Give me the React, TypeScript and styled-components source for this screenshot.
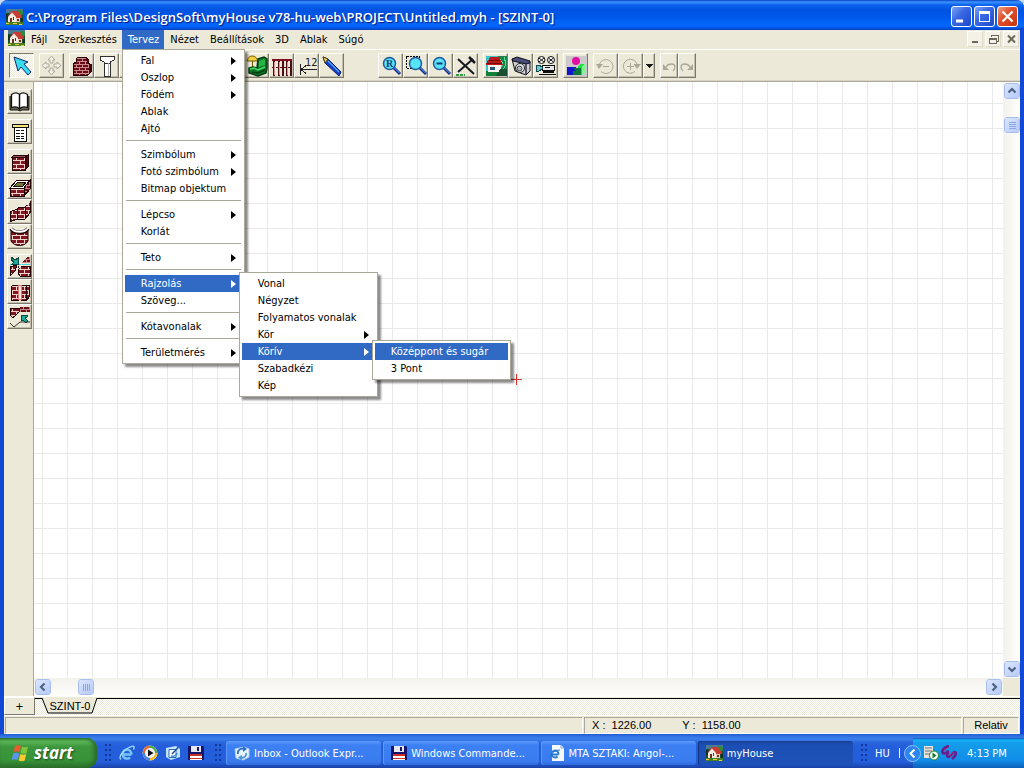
import React from "react";
import styled, { createGlobalStyle, css } from "styled-components";

const Global = createGlobalStyle`
  * { box-sizing: border-box; }
  html, body { margin: 0; padding: 0; background: #c8d8ee; }
  body, button {
    font-family: Tahoma, "DejaVu Sans Condensed", "Noto Sans", sans-serif;
    font-size: 11px;
    line-height: 17px;
    color: #000;
  }
  button { border: 0; padding: 0; background: none; }
  svg { display: block; }
  ul { list-style: none; margin: 0; padding: 0; }
`;

const face = "#ece9d8";
const select = "#316ac5";

const Desktop = styled.div`
  display: flex;
  flex-direction: column;
  min-height: 100vh;
`;

const Window = styled.main`
  flex: 1;
  display: flex;
  flex-direction: column;
  border: solid #1248d8;
  border-width: 0 4px;
  border-radius: 8px 8px 0 0;
  background: ${face};
`;

const TitleBar = styled.header`
  display: flex;
  align-items: center;
  gap: 2px;
  height: 30px;
  margin: 0 -4px;
  padding: 3px 6px 0;
  border-radius: 8px 8px 0 0;
  background: linear-gradient(#0a3fc4 0, #3a94ff 2px, #0c62ee 5px, #0053e1 10px, #0058ea 17px, #0267fb 24px, #0260f5 27px, #0040c0 30px);
`;

const Title = styled.h1`
  flex: 1;
  min-width: 0;
  margin: 0 0 0 1px;
  overflow: hidden;
  white-space: nowrap;
  font: 600 13px/20px "Trebuchet MS", "Open Sans", sans-serif;
  color: #fff;
  text-shadow: 1px 1px 1px #0a1883;
`;

const CaptionButton = styled.button<{ $close?: boolean }>`
  width: 21px;
  height: 21px;
  border: 1px solid #fff;
  border-radius: 3px;
  background: ${(p) =>
    p.$close
      ? "linear-gradient(135deg, #f0a488, #e0512c 40%, #c4350f)"
      : "linear-gradient(135deg, #7ea4f4, #3a6ae4 40%, #1c46cc)"};
`;

const MenuBar = styled.nav`
  display: flex;
  height: 20px;
  padding: 0 1px 0 4px;
  border-bottom: 1px solid #fff;
`;

const Spring = styled.span`
  flex: 1;
`;

const MenuSlot = styled.div`
  position: relative;
`;

const MenuLabel = styled.button<{ $open?: boolean }>`
  height: 19px;
  padding: 0 5px 0 6px;
  background: ${(p) => (p.$open ? select : "transparent")};
  color: ${(p) => (p.$open ? "#fff" : "#000")};
`;

const MdiButton = styled.button`
  width: 16px;
  height: 16px;
  margin: 1px 0 0 2px;
  border: 1px solid;
  border-color: #fff #dedac8 #dedac8 #fff;
  background: #f3f1e8;
`;

const Popup = styled.ul<{ $sub?: boolean }>`
  position: absolute;
  z-index: 2;
  top: ${(p) => (p.$sub ? "-3px" : "19px")};
  left: ${(p) => (p.$sub ? "calc(100% - 3px)" : "0")};
  width: ${(p) => (p.$sub ? "139px" : "123px")};
  padding: 2px;
  border: 1px solid #aca899;
  background: #fff;
  box-shadow: 3px 3px 2px rgba(0, 0, 0, 0.45);
`;

const Entry = styled.li`
  position: relative;
`;

const EntryButton = styled.button<{ $on?: boolean }>`
  display: flex;
  align-items: center;
  justify-content: space-between;
  width: 100%;
  height: 17px;
  padding: 0 6px 0 16px;
  white-space: nowrap;
  background: ${(p) => (p.$on ? select : "transparent")};
  color: ${(p) => (p.$on ? "#fff" : "#000")};
`;

const Separator = styled.li`
  height: 1px;
  margin: 3px 1px 5px;
  background: #aca899;
`;

const ToolBar = styled.div`
  display: flex;
  height: 32px;
  padding: 3px 5px 0;
  border-bottom: 1px solid #aca899;
  box-shadow: inset 0 -1px #d8d4c4;
`;

const ToolGroup = styled.div<{ $column?: boolean }>`
  display: flex;
  flex-direction: ${(p) => (p.$column ? "column" : "row")};
  margin: ${(p) => (p.$column ? "0 0 5px" : "0 5px 0 0")};
`;

const ToolGap = styled.span`
  width: 29px;
`;

const ToolButton = styled.button<{ $w?: number; $pressed?: boolean }>`
  display: flex;
  align-items: center;
  justify-content: center;
  width: ${(p) => p.$w ?? 25}px;
  height: 25px;
  border: 1px solid;
  border-color: #fff #7c796c #7c796c #fff;
  box-shadow: inset -1px -1px #c4c0b0;
  ${(p) =>
    p.$pressed &&
    css`
      border-color: #7c796c #fff #fff #7c796c;
      box-shadow: none;
      background: repeating-conic-gradient(#fff 0 25%, #ece9d8 0 50%) 0 0 / 2px 2px;
    `}
`;

const Work = styled.div`
  flex: 1;
  display: flex;
`;

const SideBar = styled.aside`
  width: 30px;
  padding: 7px 0 0 3px;
  border-right: 1px solid #aca899;
`;

const View = styled.section`
  flex: 1;
  display: grid;
  grid-template: 1fr 18px / 1fr 17px;
`;

const Canvas = styled.div`
  position: relative;
  background:
    linear-gradient(90deg, #e9e9e9 1px, transparent 1px) 8px 0 / 25px 25px,
    linear-gradient(#e9e9e9 1px, transparent 1px) 0 21px / 25px 25px,
    #fff;
`;

const Cross = styled.svg`
  position: absolute;
  left: 477px;
  top: 292px;
`;

const Track = styled.div<{ $v?: boolean }>`
  display: flex;
  flex-direction: ${(p) => (p.$v ? "column" : "row")};
  padding: 1px;
  background: ${(p) =>
    p.$v
      ? "linear-gradient(90deg, #f3f1ec, #fefefb)"
      : "linear-gradient(#f3f1ec, #fefefb)"};
`;

const TrackGap = styled.span<{ $size?: number }>`
  flex: ${(p) => (p.$size ? `0 0 ${p.$size}px` : "1")};
`;

const ScrollPart = styled.button`
  display: flex;
  align-items: center;
  justify-content: center;
  width: 16px;
  height: 16px;
  flex: none;
  border: 1px solid #fff;
  border-radius: 3px;
  outline: 1px solid #a8bfec;
  outline-offset: -1px;
  background: linear-gradient(135deg, #dbe6ff, #b6caf8);
`;

const TabStrip = styled.div`
  display: flex;
  height: 19px;
  border-top: 1px solid #fff;
`;

const AddTab = styled.button`
  width: 31px;
  height: 18px;
  border: 1px solid;
  border-color: #fff #7c796c #7c796c #fff;
`;

const TabWell = styled.div`
  flex: 1;
  margin-top: 1px;
  padding-left: 7px;
  border-top: 1px solid #000;
  background: repeating-conic-gradient(#fff 0 25%, #ece9d8 0 50%) 0 0 / 2px 2px;
`;

const Tab = styled.button`
  position: relative;
  display: block;
  width: 56px;
  height: 16px;
  margin-top: -1px;
  line-height: 16px;
  font-family: "Liberation Sans", sans-serif;
`;

const TabShape = styled.svg`
  position: absolute;
  inset: 0;
`;

const TabText = styled.span`
  position: relative;
`;

const StatusBar = styled.footer`
  display: flex;
  gap: 1px;
  height: 19px;
  padding: 1px 1px 0;
  border-top: 1px solid #fff;
  font: 11px/15px "Liberation Sans", sans-serif;
`;

const StatusCell = styled.div<{ $w?: number; $center?: boolean }>`
  flex: ${(p) => (p.$w ? `0 0 ${p.$w}px` : "1")};
  display: flex;
  gap: 31px;
  justify-content: ${(p) => (p.$center ? "center" : "flex-start")};
  padding: 0 7px;
  border: 1px solid;
  border-color: #aca899 #fff #fff #aca899;
`;

const TaskBar = styled.nav`
  display: flex;
  align-items: center;
  height: 34px;
  padding-top: 4px;
  color: #fff;
  background: linear-gradient(#2458d0 0, #2f70e0 2px, #3c80ec 5px, #2c68dc 8px, #245edb 12px, #245edb 28px, #1941a5 34px);
`;

const Start = styled.button`
  display: flex;
  align-items: center;
  gap: 4px;
  width: 97px;
  height: 30px;
  padding-left: 11px;
  border-radius: 0 10px 10px 0;
  font: italic bold 17px/26px "Trebuchet MS", "Open Sans", sans-serif;
  color: #fff;
  text-shadow: 1px 1px 2px #1a4a1a;
  background: linear-gradient(#2f7d2f, #5cb85a 3px, #3c963c 9px, #389438 22px, #2a702a);
  box-shadow: inset -3px 0 4px #2a6a2a;
`;

const Quick = styled.div`
  display: flex;
  gap: 7px;
  margin: 0 3px 0 8px;
`;

const QuickButton = styled.button`
  width: 16px;
  height: 16px;
`;

const Grip = styled.span`
  width: 6px;
  height: 18px;
  margin-left: 8px;
  background: radial-gradient(circle at 1px 1px, #12389c 1px, transparent 1px) 0 0 / 4px 5px;
`;

const Tasks = styled.div`
  flex: 1;
  display: flex;
  gap: 2px;
  min-width: 0;
  margin-left: 5px;
`;

const Task = styled.button<{ $active?: boolean }>`
  flex: 1;
  display: flex;
  align-items: center;
  gap: 4px;
  min-width: 0;
  height: 24px;
  padding: 0 8px;
  border-radius: 3px;
  white-space: nowrap;
  color: #fff;
  background: ${(p) =>
    p.$active
      ? "linear-gradient(#163f96, #1c4fb4 4px, #1e52b8)"
      : "linear-gradient(#5c9cfc, #3c80f4 4px, #3a7cf0 20px, #2f6ad8)"};
  box-shadow: inset 1px 0 ${(p) => (p.$active ? "#12347c" : "#5a98fa")};
`;

const Language = styled.div`
  display: flex;
  align-items: center;
  justify-content: space-between;
  width: 38px;
  padding: 0 13px 0 0;
  margin-left: 8px;
`;

const LangBar = styled.span`
  width: 1px;
  height: 10px;
  background: #fff;
`;

const Tray = styled.div`
  display: flex;
  align-items: center;
  gap: 2px;
  height: 30px;
  width: 111px;
  background: linear-gradient(#0c59b9, #18b0f8 2px, #139ee9 5px, #118ee9 22px, #0c60b8);
`;

const Chevron = styled.button`
  width: 17px;
  height: 17px;
  margin-left: -9px;
`;

const Clock = styled.time`
  margin-left: 8px;
`;

type DrawingProps = { children: React.ReactNode; w?: number };

/* 23px drawing area inside the bevel of a 25px tool button */
const ToolIcon = ({ children, w = 23 }: DrawingProps) => (
  <svg width={w} height={23} viewBox={`1 1 ${w} 23`} aria-hidden="true" shapeRendering="crispEdges">
    {children}
  </svg>
);

const Small = ({ children }: DrawingProps) => (
  <svg width={16} height={16} viewBox="0 0 16 16" aria-hidden="true">
    {children}
  </svg>
);

const PatternSheet = styled.svg`
  position: absolute;
`;

const BrickPatterns = () => (
  <PatternSheet width="0" height="0" aria-hidden="true">
    <defs>
      <pattern id="brick" width="6" height="6" patternUnits="userSpaceOnUse">
        <rect width="6" height="6" fill="#6c0c18" />
        <path d="M0 2.500H6M0 5.500H6M1.500 0V2M4.500 3V5" stroke="#c88c8c" />
      </pattern>
      <pattern id="block" width="8" height="8" patternUnits="userSpaceOnUse">
        <rect width="8" height="8" fill="#801420" />
        <path d="M0 3.500H8M0 7.500H8M1.500 0V3M5.500 4V7" stroke="#f0d4cc" />
      </pattern>
    </defs>
  </PatternSheet>
);

const House = () => (
  <svg width={17} height={16} viewBox="0 0 17 16" aria-hidden="true">
    <rect width="17" height="16" fill="#1e4a38" />
    <rect width="17" height="4" fill="#4a7a94" />
    <circle cx="14" cy="4" r="3" fill="#2c8c3c" />
    <path d="M0 13h17v3H0z" fill="#4a7c20" />
    <path d="M2 7.500 5.500 2H12l4 6v1H9z" fill="#c83c34" />
    <path d="M2 8l4-4.500 4 4.500v5H2z" fill="#f4ece0" />
    <path d="M10 9h4v4h-4z" fill="#e8ccc0" />
    <path d="M4 9h2v4H4zM7 8h1v3H7zM11 10h2v2h-2z" fill="#6c3020" />
    <path d="M0 14h3v1H0zM7 14h4v1H7zM13 15h3v1h-3z" fill="#e8d040" />
    <path d="M0 5h2v5H0zM15 9h2v4h-2z" fill="#103020" />
  </svg>
);

const Floppy = () => (
  <Small>
    <path d="M0 1h15l1 1v13H0z" fill="#14146c" />
    <path d="M3 1h10v6H3z" fill="#e8e8f0" />
    <path d="M9 2h2v4H9z" fill="#14146c" />
    <path d="M2 9h12v6H2z" fill="#fff" />
    <path d="M2 9h12v2H2zM2 13h12v1H2z" fill="#c83028" />
  </Small>
);

const Explorer = () => (
  <Small>
    <path d="M12.500 9.500H4.500M12.500 9.500A4.500 4.500 0 1 0 11 12.500" fill="none" stroke="#74c4fa" strokeWidth="2.400" />
    <path d="M2 14.500C-1 13 3 6 9 3s7-2 5.500 1.500" fill="none" stroke="#a4dcff" strokeWidth="1.300" />
  </Small>
);

const Media = () => (
  <Small>
    <circle cx="8" cy="8" r="7.500" fill="#e8ecf0" />
    <path d="M8 8V.500A7.500 7.500 0 0 0 .500 8z" fill="#e86c30" />
    <path d="M8 8H.500A7.500 7.500 0 0 0 8 15.500z" fill="#4c84dc" />
    <path d="M8 8v7.500A7.500 7.500 0 0 0 15.500 8z" fill="#f0c038" />
    <path d="M8 8h7.500A7.500 7.500 0 0 0 8 .500z" fill="#54a850" />
    <circle cx="8" cy="8" r="5" fill="#f4f4f4" />
    <path d="M6 4.500v7L11.500 8z" fill="#101010" />
  </Small>
);

const ShowDesktop = () => (
  <Small>
    <path d="M1 3l10-2 4 3v8l-9 3-5-3z" fill="#c4e4fc" />
    <path d="M4 4.500h7v8H4z" fill="#fff" stroke="#2c6cb4" />
    <path d="M13 2.500 7 9" stroke="#205090" strokeWidth="1.500" />
    <path d="M6 11c3 1 6-1 6-3" fill="none" stroke="#3c88d8" strokeWidth="1.500" />
  </Small>
);

const Outlook = () => (
  <Small>
    <path d="M1 4l9-2 5 2v8l-6 3-7-2z" fill="#e8f4fc" stroke="#b0d0f0" />
    <path d="M4 9c-1-4 3-6 6-5" fill="none" stroke="#2870c4" strokeWidth="1.800" />
    <path d="M9 1l4 3-4 3z" fill="#2870c4" />
    <path d="M12 8c1 3-2 5-5 5" fill="none" stroke="#4c94e0" strokeWidth="1.800" />
    <path d="M8 10l-4 2 4 4z" fill="#4c94e0" />
  </Small>
);

const WebPage = () => (
  <Small>
    <path d="M3 0h9l3 3v13H3z" fill="#f4f8fc" />
    <path d="M12 0v3h3" fill="none" stroke="#8ca8c8" />
    <path d="M9.500 9.500H3M9.500 9.500A3.500 3.500 0 1 0 8.500 11.500" fill="none" stroke="#2878d0" strokeWidth="1.800" />
    <path d="M1 13.500C-1 11 5 5 11 5" fill="none" stroke="#2878d0" />
  </Small>
);

const Flag = () => (
  <svg width={19} height={18} viewBox="0 0 19 18" aria-hidden="true">
    <path d="M4 2c2-1 4-1 6 0L8.500 8c-2-1-4-1-6 0z" fill="#ec5a30" />
    <path d="M11 2.500c2 1 4 1 6 0L15.500 9c-2 1-4 1-6 0z" fill="#7cc83c" />
    <path d="M2.200 9.500c2-1 4-1 6 0L6.700 16c-2-1-4-1-6 0z" fill="#5c94f4" />
    <path d="M9.200 10c2 1 4 1 6 0l-1.500 6.500c-2 1-4 1-6 0z" fill="#f8cc30" />
  </svg>
);

const Lens = ({ children, x = 0 }: { children?: React.ReactNode; x?: number }) => (
  <g shapeRendering="auto" transform={`translate(${x} 0)`}>
    <path d="M15 14l7 7" stroke="#182c8c" strokeWidth="3" />
    <path d="M15.500 14l6 6" stroke="#58b0e8" />
    <circle cx="11.500" cy="10.500" r="6" fill="#58e4f8" stroke="#2058a0" strokeWidth="1.500" />
    {children}
  </g>
);

const Arrow = () => (
  <svg width={5} height={8} viewBox="0 0 5 8" aria-hidden="true">
    <path d="M0 0v8l5-4z" fill="currentColor" />
  </svg>
);

const Angle = ({ turn }: { turn: number }) => (
  <svg width={10} height={10} viewBox="0 0 10 10" aria-hidden="true">
    <path d="M1.500 6.500 5 3l3.500 3.500" fill="none" stroke="#4d6185" strokeWidth="2.200" transform={`rotate(${turn} 5 5)`} />
  </svg>
);

const Ridges = ({ v }: { v?: boolean }) => (
  <svg width={9} height={9} viewBox="0 0 9 9" aria-hidden="true" shapeRendering="crispEdges">
    <path
      d={v ? "M1 1.500h7M1 3.500h7M1 5.500h7M1 7.500h7" : "M1.500 1v7M3.500 1v7M5.500 1v7M7.500 1v7"}
      stroke="#8ca8e4"
    />
  </svg>
);

type Tool = { name: string; icon: React.ReactNode; w?: number; pressed?: boolean };

const grey = "#aca899";

const tools: Record<string, Tool> = {
  pointer: {
    name: "Kijelölés",
    pressed: true,
    icon: (
      <ToolIcon>
        <path d="M5 4 19 9l-4 2 7 8-3 3-7-8-3 4z" fill="#38dcec" stroke="#102870" shapeRendering="auto" />
      </ToolIcon>
    ),
  },
  move: {
    name: "Mozgatás",
    icon: (
      <ToolIcon>
        <path
          d="M12.500 3 16 7h-2v3h-3V7H9zM12.500 22 16 18h-2v-3h-3v3H9zM3 12.500 7 9v2h3v3H7v2zM22 12.500 18 9v2h-3v3h3v2z"
          fill="#f4f2e8"
          stroke={grey}
          shapeRendering="auto"
        />
      </ToolIcon>
    ),
  },
  wall: {
    name: "Fal",
    icon: (
      <ToolIcon>
        <path d="M4 21V11l3-2V6l2-2h8l2 3v3l3 2v7l-3 3H4z" fill="url(#brick)" stroke="#200408" />
        <path d="M20 11v10l3-3v-7zM17 4l3 3v3h-2z" fill="#3c040c" />
      </ToolIcon>
    ),
  },
  column: {
    name: "Oszlop",
    icon: (
      <ToolIcon>
        <path d="M10 9h6v14h-6z" fill="#fff" stroke="#303030" />
        <path d="M6 3h14v4l-4 2v1h-6V9L6 7z" fill="#fff" stroke="#303030" />
        <path d="M14.500 10v13" stroke="#b0b0b0" />
      </ToolIcon>
    ),
  },
  slab: { name: "Födém", icon: <ToolIcon><path d="M4 8h16v4H4z" fill="url(#brick)" /></ToolIcon> },
  window: { name: "Ablak", icon: <ToolIcon><path d="M6 5h12v14H6zM12 5v14" fill="none" stroke="#000" /></ToolIcon> },
  door: { name: "Ajtó", icon: <ToolIcon><path d="M7 4h10v17H7z" fill="#a06030" stroke="#000" /></ToolIcon> },
  stair: { name: "Lépcső", icon: <ToolIcon><path d="M4 20v-4h5v-4h5V8h6" fill="none" stroke="#000" /></ToolIcon> },
  roof: { name: "Tető", icon: <ToolIcon><path d="M3 18 12 6l9 12z" fill="#a02020" /></ToolIcon> },
  chair: {
    name: "Szimbólum",
    icon: (
      <ToolIcon>
        <g shapeRendering="auto">
          <path d="M8.500 8v10" stroke="#705000" />
          <path d="M3 8c1-4 3-5 5.500-5S13 5 14 8z" fill="#f0d040" stroke="#705800" />
          <path d="M14 6l6-2 3 2v9l-1 5-8 3-9-3v-5l4-1 4 1z" fill="#10782c" stroke="#043c10" strokeWidth="1.500" />
          <path d="M15 8l5-2 1 1v5l-6 2z" fill="#28b444" />
          <path d="M6 16l4-1 4 2 7-3" fill="none" stroke="#40e060" strokeWidth="1.500" />
          <path d="M8 19l6 1 7-3" fill="none" stroke="#043c10" strokeWidth="1.500" />
        </g>
      </ToolIcon>
    ),
  },
  fence: {
    name: "Korlát",
    icon: (
      <ToolIcon>
        <path d="M3 6h20v2H3z" fill="#7c1020" />
        <path d="M5 8v15M10 8v15M14 8v15M18 8v15M22 8v15" stroke="#4c0c14" strokeWidth="2" />
        <path d="M5.500 9v13M10.500 9v13M18.500 9v13" stroke="#e09090" />
        <path d="M3 14.500h20" stroke="#601018" strokeDasharray="2 2" />
      </ToolIcon>
    ),
  },
  dimension: {
    name: "Kótavonal",
    icon: (
      <ToolIcon>
        <path d="M6.500 11v11M7 16.500h16M7 16.500l5-4M7 16.500l5 4" fill="none" stroke="#202020" />
        <text x="11" y="13" fontSize="11" fontFamily="DejaVu Sans Condensed, sans-serif" fill="#202020">12</text>
      </ToolIcon>
    ),
  },
  pencil: {
    name: "Rajzolás",
    icon: (
      <ToolIcon>
        <g shapeRendering="auto">
          <path d="M4 4l5 2 13 13-2 4L6 10z" fill="#1440c8" stroke="#081c60" />
          <path d="M9 8l11 11" stroke="#58a4f8" strokeWidth="1.300" />
          <path d="M4 4l5 2-3 4z" fill="#f0d060" stroke="#504010" />
        </g>
      </ToolIcon>
    ),
  },
  zoomReal: {
    name: "Újrarajzolás",
    icon: (
      <ToolIcon>
        <Lens>
          <text x="8" y="14" fontSize="10" fontWeight="bold" fontFamily="Liberation Serif, serif" fill="#104070">R</text>
        </Lens>
      </ToolIcon>
    ),
  },
  zoomBox: {
    name: "Nagyítás ablakban",
    icon: (
      <ToolIcon>
        <rect x="3.500" y="3.500" width="13" height="12" fill="none" stroke="#000" strokeDasharray="2 1" />
        <Lens x={1} />
      </ToolIcon>
    ),
  },
  zoomOut: {
    name: "Kicsinyítés",
    icon: (
      <ToolIcon>
        <Lens><path d="M8.500 10.500h6" stroke="#104070" strokeWidth="2" /></Lens>
      </ToolIcon>
    ),
  },
  trim: {
    name: "Eszközök",
    icon: (
      <ToolIcon>
        <g shapeRendering="auto">
          <path d="M5 6l16 15M5 19 20 6" stroke="#181820" strokeWidth="2" />
          <path d="M16 4l6 6" stroke="#181820" strokeWidth="2.500" />
          <path d="M3 22h9" stroke="#30a040" strokeWidth="2" strokeDasharray="3 1" />
        </g>
      </ToolIcon>
    ),
  },
  view3d: {
    name: "3D nézet",
    icon: (
      <ToolIcon>
        <path d="M3 3h21v20H3z" fill="#38c4c8" />
        <path d="M15 3h9v20h-6z" fill="#20804c" />
        <path d="M17 6l3 5-2 3M21 4l2 7-3 6" fill="none" stroke="#50e098" />
        <path d="M3 18h18v5H3z" fill="#108038" />
        <path d="M5 12h13v7H5z" fill="#f4f4f4" />
        <path d="M3 11l4-7h9l4 8H3z" fill="#c01818" />
        <path d="M6 7.500h11M4 10.500h15" stroke="#681010" />
        <path d="M7 14h5v3H7z" fill="#285878" />
        <path d="M13 23l4-7h7v7z" fill="#185030" />
      </ToolIcon>
    ),
  },
  camera: {
    name: "Fényképezés",
    icon: (
      <ToolIcon>
        <g shapeRendering="auto">
          <path d="M4 6l14 4 4-1v9l-4 4L7 18z" fill="#d0d0d4" stroke="#101018" />
          <path d="M4 6l5-2 13 4v2l-4 1-13-3z" fill="#484f7c" stroke="#101018" />
          <path d="M18 11v10" stroke="#303040" strokeWidth="1.500" />
          <circle cx="12" cy="15" r="4.500" fill="#e8e8e8" stroke="#202028" />
          <circle cx="11.500" cy="15.500" r="2.500" fill="#b0b4b8" stroke="#404448" />
        </g>
      </ToolIcon>
    ),
  },
  movie: {
    name: "Filmfelvétel",
    icon: (
      <ToolIcon>
        <g shapeRendering="auto">
          <circle cx="8.500" cy="7" r="3.500" fill="#fff" stroke="#101010" />
          <circle cx="18" cy="7" r="3.500" fill="#fff" stroke="#101010" />
          <path d="M6 5l5 4M11 5l-5 4M15.500 5l5 4M20.500 5l-5 4" stroke="#101010" />
        </g>
        <path d="M9 12h12v5H9z" fill="#e8e8e8" stroke="#101010" />
        <path d="M3 12h3l3 2v2l-3 2H3z" fill="#68c8d0" stroke="#104850" />
        <path d="M6 21.500h17M10 19h11M12 14.500h5" stroke="#101010" strokeWidth="1.500" />
      </ToolIcon>
    ),
  },
  shapes: {
    name: "Objektumok",
    icon: (
      <ToolIcon>
        <path d="M3 3h21v20H3z" fill="#ccc8cc" />
        <circle cx="13" cy="8" r="4" fill="#e010a0" shapeRendering="auto" />
        <path d="M4 14h9v4h-3v4H4z" fill="#1414c8" />
        <path d="M15 13l3-2h4v9l-3 2h-4z" fill="#20e040" />
        <path d="M19 13v9l3-2v-9z" fill="#80f490" />
        <path d="M10 15h8v7h-8v-4h3z" fill="#087838" />
      </ToolIcon>
    ),
  },
  turnBack: {
    name: "Visszaforgatás",
    icon: (
      <ToolIcon>
        <g shapeRendering="auto">
          <path d="M6.500 11a7 7 0 1 1 1.500 7.500" fill="none" stroke={grey} />
          <path d="M3 11h7l-4 5z" fill={grey} />
          <path d="M10 13.500h6" stroke={grey} />
        </g>
      </ToolIcon>
    ),
  },
  turn: {
    name: "Forgatás",
    icon: (
      <ToolIcon>
        <g shapeRendering="auto">
          <path d="M19 11a7 7 0 1 0-2 7.500" fill="none" stroke={grey} />
          <path d="M15.500 11H23l-4 5z" fill={grey} />
          <path d="M9 13.500h7M12.500 10v7" stroke={grey} />
        </g>
      </ToolIcon>
    ),
  },
  turnMenu: {
    name: "Forgatás beállításai",
    w: 12,
    icon: (
      <ToolIcon w={10}>
        <path d="M2 11h8l-4 4z" fill="#181818" />
      </ToolIcon>
    ),
  },
  undo: {
    name: "Visszavonás",
    w: 18,
    icon: (
      <ToolIcon w={16}>
        <g shapeRendering="auto">
          <path d="M3 11v6h6z" fill={grey} />
          <path d="M6 14c2-4 9-4 9 0 0 2-1 3-2 4" fill="none" stroke={grey} strokeWidth="1.300" />
        </g>
      </ToolIcon>
    ),
  },
  redo: {
    name: "Ismétlés",
    w: 18,
    icon: (
      <ToolIcon w={16}>
        <g shapeRendering="auto">
          <path d="M15 11v6H9z" fill={grey} />
          <path d="M12 14c-2-4-9-4-9 0 0 2 1 3 2 4" fill="none" stroke={grey} strokeWidth="1.300" />
        </g>
      </ToolIcon>
    ),
  },
  book: {
    name: "Katalógus",
    icon: (
      <ToolIcon>
        <g shapeRendering="auto">
          <path d="M3 7v14h8l2 1 2-1h7V7" fill="#686850" stroke="#101010" />
          <path d="M4.500 5.500c3-2 6-2 8 0 2-2 5-2 8 0v13c-3-1-6-1-8 1.500-2-2.500-5-2.500-8-1.500z" fill="#fff" stroke="#101010" strokeWidth="1.300" />
          <path d="M12.500 6v14" stroke="#101010" strokeWidth="1.500" />
        </g>
      </ToolIcon>
    ),
  },
  list: {
    name: "Lista",
    icon: (
      <ToolIcon>
        <path d="M7 7h12v15H7z" fill="#fff" stroke="#101010" />
        <path d="M5 5h16v3H5z" fill="#f0e878" stroke="#101010" />
        <path d="M9 11.500h4M9 14.500h4M9 17.500h4M9 19.500h4M14 11.500h3M14 14.500h3M14 17.500h3M14 19.500h3" stroke="#101010" />
      </ToolIcon>
    ),
  },
  wallOne: {
    name: "Egy fal",
    icon: (
      <ToolIcon>
        <path d="M5 8h13v13H5z" fill="url(#block)" stroke="#200408" />
        <path d="M5 8l2-2h14l-3 2z" fill="#a85050" stroke="#200408" />
        <path d="M18 8l3-2v12l-3 3z" fill="#4c0810" stroke="#200408" />
      </ToolIcon>
    ),
  },
  wallRoom: {
    name: "Szoba",
    icon: (
      <ToolIcon>
        <path d="M3 14h14v8H3z" fill="url(#block)" stroke="#200408" />
        <path d="M3 14l7-8h13l-6 8z" fill="#fff" stroke="#200408" />
        <path d="M7 12l4-4h8l-3 4z" fill="#70783c" stroke="#200408" />
        <path d="M17 14l6-8v9l-6 7z" fill="url(#brick)" stroke="#200408" />
      </ToolIcon>
    ),
  },
  wallChain: {
    name: "Folyamatos fal",
    icon: (
      <ToolIcon>
        <path d="M3 13l7-3 2-2h6l5-5v11l-5 6h-8l-7 3z" fill="url(#block)" stroke="#200408" />
        <path d="M3 12l7-3 2-2h6l5-4" fill="none" stroke="#f8e8e0" />
        <path d="M10 10v11M18 8v12" stroke="#200408" />
      </ToolIcon>
    ),
  },
  wallArc: {
    name: "Íves fal",
    icon: (
      <ToolIcon>
        <g shapeRendering="auto">
          <path d="M4 6c3 5 14 5 17 0v11c-3 6-14 6-17 0z" fill="url(#block)" stroke="#200408" />
          <path d="M4 4.500c3 5 14 5 17 0" fill="none" stroke="#200408" strokeWidth="3.500" />
          <path d="M4 4c3 5 14 5 17 0" fill="none" stroke="#fff" strokeWidth="1.800" />
        </g>
      </ToolIcon>
    ),
  },
  wallSplit: {
    name: "Fal osztása",
    icon: (
      <ToolIcon>
        <path d="M11 12h12v10H13l-2-3zM3 22v-9l7-2-2 6z" fill="url(#block)" stroke="#200408" />
        <path d="M15 9l5-6h3v6z" fill="url(#brick)" />
        <path d="M3 10.500h20" stroke="#50d0d8" />
        <path d="M5 22 16 9" stroke="#f8e8e0" />
        <path d="M4 3l4 3 3-2v6H5l2-2-3-2z" fill="#20a898" stroke="#084840" />
      </ToolIcon>
    ),
  },
  wallJoin: {
    name: "Fal egyesítése",
    icon: (
      <ToolIcon>
        <path d="M4 8l2-2h5v15H4zM14 6h8v12l-2 3h-6z" fill="url(#block)" stroke="#200408" />
        <path d="M7 6h4v15M19 7v14" fill="none" stroke="#200408" />
        <path d="M11 6h3v14h-3z" fill="#fbe8e0" stroke="#e87878" />
      </ToolIcon>
    ),
  },
  wallCorner: {
    name: "Falsarok",
    icon: (
      <ToolIcon>
        <path d="M3 4h9v4l-6 6-3-3z" fill="url(#block)" stroke="#200408" />
        <path d="M13 3h10v5H13z" fill="url(#brick)" />
        <path d="M14 11h6v2l-2 1 3 3-2 2-3-3-2 1z" fill="#20a898" stroke="#084840" />
        <path d="M3 19l4 4 6-5h10" fill="none" stroke="#303030" shapeRendering="auto" />
      </ToolIcon>
    ),
  },
};

const Group = ({ ids, column }: { ids: string[]; column?: boolean }) => (
  <ToolGroup $column={column}>
    {ids.map((id) => (
      <ToolButton key={id} aria-label={tools[id].name} $w={tools[id].w} $pressed={tools[id].pressed}>
        {tools[id].icon}
      </ToolButton>
    ))}
  </ToolGroup>
);

type Item = { label: string; more?: boolean; on?: boolean; sub?: Item[] } | null;

const planMenu: Item[] = [
  { label: "Fal", more: true },
  { label: "Oszlop", more: true },
  { label: "Födém", more: true },
  { label: "Ablak" },
  { label: "Ajtó" },
  null,
  { label: "Szimbólum", more: true },
  { label: "Fotó szimbólum", more: true },
  { label: "Bitmap objektum" },
  null,
  { label: "Lépcso", more: true },
  { label: "Korlát" },
  null,
  { label: "Teto", more: true },
  null,
  {
    label: "Rajzolás",
    more: true,
    on: true,
    sub: [
      { label: "Vonal" },
      { label: "Négyzet" },
      { label: "Folyamatos vonalak" },
      { label: "Kör", more: true },
      {
        label: "Körív",
        more: true,
        on: true,
        sub: [{ label: "Középpont és sugár", on: true }, { label: "3 Pont" }],
      },
      { label: "Szabadkézi" },
      { label: "Kép" },
    ],
  },
  { label: "Szöveg..." },
  null,
  { label: "Kótavonalak", more: true },
  null,
  { label: "Területmérés", more: true },
];

const Menu = ({ items, sub }: { items: Item[]; sub?: boolean }) => (
  <Popup $sub={sub}>
    {items.map((item, i) =>
      item ? (
        <Entry key={item.label}>
          <EntryButton $on={item.on}>
            {item.label}
            {item.more && <Arrow />}
          </EntryButton>
          {item.sub && <Menu items={item.sub} sub />}
        </Entry>
      ) : (
        <Separator key={i} />
      )
    )}
  </Popup>
);

const menuNames = ["Fájl", "Szerkesztés", "Tervez", "Nézet", "Beállítások", "3D", "Ablak", "Súgó"];

export default function App() {
  return (
    <Desktop>
      <Global />
      <BrickPatterns />
      <Window>
        <TitleBar>
          <House />
          <Title>C:\Program Files\DesignSoft\myHouse v78-hu-web\PROJECT\Untitled.myh - [SZINT-0]</Title>
          <CaptionButton aria-label="Kis méret">
            <svg width={19} height={19}><path d="M4 14h7" stroke="#fff" strokeWidth="3" /></svg>
          </CaptionButton>
          <CaptionButton aria-label="Teljes méret">
            <svg width={19} height={19} shapeRendering="crispEdges">
              <path d="M4.500 5v9.500h10V5" fill="none" stroke="#fff" />
              <path d="M4 5.500h11" stroke="#fff" strokeWidth="3" />
            </svg>
          </CaptionButton>
          <CaptionButton $close aria-label="Bezárás">
            <svg width={19} height={19}><path d="M4.500 4.500l10 10M14.500 4.500l-10 10" stroke="#fff" strokeWidth="2.200" /></svg>
          </CaptionButton>
        </TitleBar>
        <MenuBar>
          <House />
          {menuNames.map((name) => (
            <MenuSlot key={name}>
              <MenuLabel $open={name === "Tervez"}>{name}</MenuLabel>
              {name === "Tervez" && <Menu items={planMenu} />}
            </MenuSlot>
          ))}
          <Spring />
          <MdiButton aria-label="Ablak kis méret">
            <svg width={14} height={14}><path d="M4 10h6" stroke="#6c6858" strokeWidth="2" /></svg>
          </MdiButton>
          <MdiButton aria-label="Ablak visszaállítása">
            <svg width={14} height={14} shapeRendering="crispEdges">
              <path d="M5 5V3h7v6h-2M5 3.500h7M3 6.500h7v5H3zM3 7h7" fill="none" stroke="#6c6858" />
            </svg>
          </MdiButton>
          <MdiButton aria-label="Ablak bezárása">
            <svg width={14} height={14}><path d="M4 3.500l7 7M11 3.500l-7 7" stroke="#6c6858" strokeWidth="2" /></svg>
          </MdiButton>
        </MenuBar>
        <ToolBar>
          <Group ids={["pointer"]} />
          <Group ids={["move"]} />
          <Group ids={["wall", "column", "slab", "window", "door", "stair", "roof", "chair", "fence", "dimension", "pencil"]} />
          <ToolGap />
          <Group ids={["zoomReal", "zoomBox", "zoomOut", "trim"]} />
          <Group ids={["view3d", "camera", "movie"]} />
          <Group ids={["shapes"]} />
          <Group ids={["turnBack", "turn", "turnMenu"]} />
          <Group ids={["undo", "redo"]} />
        </ToolBar>
        <Work>
          <SideBar>
            <Group column ids={["book"]} />
            <Group column ids={["list"]} />
            <Group column ids={["wallOne", "wallRoom", "wallChain", "wallArc"]} />
            <Group column ids={["wallSplit", "wallJoin", "wallCorner"]} />
          </SideBar>
          <View>
            <Canvas>
              <Cross width={11} height={11} shapeRendering="crispEdges" aria-hidden="true">
                <path d="M0 5.500h11M5.500 0v11" stroke="#e03030" />
              </Cross>
            </Canvas>
            <Track $v>
              <ScrollPart aria-label="Fel"><Angle turn={0} /></ScrollPart>
              <TrackGap $size={18} />
              <ScrollPart aria-label="Függőleges görgető"><Ridges v /></ScrollPart>
              <TrackGap />
              <ScrollPart aria-label="Le"><Angle turn={180} /></ScrollPart>
            </Track>
            <Track>
              <ScrollPart aria-label="Balra"><Angle turn={270} /></ScrollPart>
              <TrackGap $size={27} />
              <ScrollPart aria-label="Vízszintes görgető"><Ridges /></ScrollPart>
              <TrackGap />
              <ScrollPart aria-label="Jobbra"><Angle turn={90} /></ScrollPart>
            </Track>
          </View>
        </Work>
        <TabStrip>
          <AddTab>+</AddTab>
          <TabWell>
            <Tab>
              <TabShape width={56} height={16} aria-hidden="true">
                <path d="M0 0l6 15h44l5-15" fill={face} stroke="#000" />
              </TabShape>
              <TabText>SZINT-0</TabText>
            </Tab>
          </TabWell>
        </TabStrip>
        <StatusBar>
          <StatusCell />
          <StatusCell $w={378}>
            <span>X :&nbsp; 1226.00</span>
            <span>Y :&nbsp; 1158.00</span>
          </StatusCell>
          <StatusCell $w={56} $center>Relativ</StatusCell>
        </StatusBar>
      </Window>
      <TaskBar>
        <Start>
          <Flag />
          start
        </Start>
        <Grip />
        <Quick>
          <QuickButton aria-label="Internet Explorer"><Explorer /></QuickButton>
          <QuickButton aria-label="Media Player"><Media /></QuickButton>
          <QuickButton aria-label="Asztal megjelenítése"><ShowDesktop /></QuickButton>
          <QuickButton aria-label="Windows Commander"><Floppy /></QuickButton>
        </Quick>
        <Grip />
        <Tasks>
          <Task><Outlook />Inbox - Outlook Expr...</Task>
          <Task><Floppy />Windows Commande...</Task>
          <Task><WebPage />MTA SZTAKI: Angol-...</Task>
          <Task $active><House />myHouse</Task>
        </Tasks>
        <Grip />
        <Language>
          HU
          <LangBar />
        </Language>
        <Tray>
          <Chevron aria-label="Rejtett ikonok">
            <svg width={17} height={17}>
              <circle cx="8.500" cy="8.500" r="8" fill="#2c84ec" stroke="#8cc4fc" />
              <path d="M10.500 4.500l-4 4 4 4" fill="none" stroke="#fff" strokeWidth="2" />
            </svg>
          </Chevron>
          <Small>
            <path d="M1 1h9v12H1z" fill="#e8e4dc" />
            <path d="M2 3h7M2 6h7M2 9h5" stroke="#707070" />
            <circle cx="11" cy="10.500" r="4.500" fill="#f8fcf8" stroke="#208030" />
            <path d="M9.500 7.500v6l4-3z" fill="#108028" />
          </Small>
          <Small>
            <path d="M8 1C3 2 0 6 2 8s5-3 5-1-2 4 0 5 5-6 7-5 0 5-3 7" fill="none" stroke="#6c1c8c" strokeWidth="2.500" />
            <path d="M6 3C3 5 3 7 5 6M9 11c1-3 3-4 4-3" fill="none" stroke="#c0307c" />
          </Small>
          <Clock>4:13 PM</Clock>
        </Tray>
      </TaskBar>
    </Desktop>
  );
}
